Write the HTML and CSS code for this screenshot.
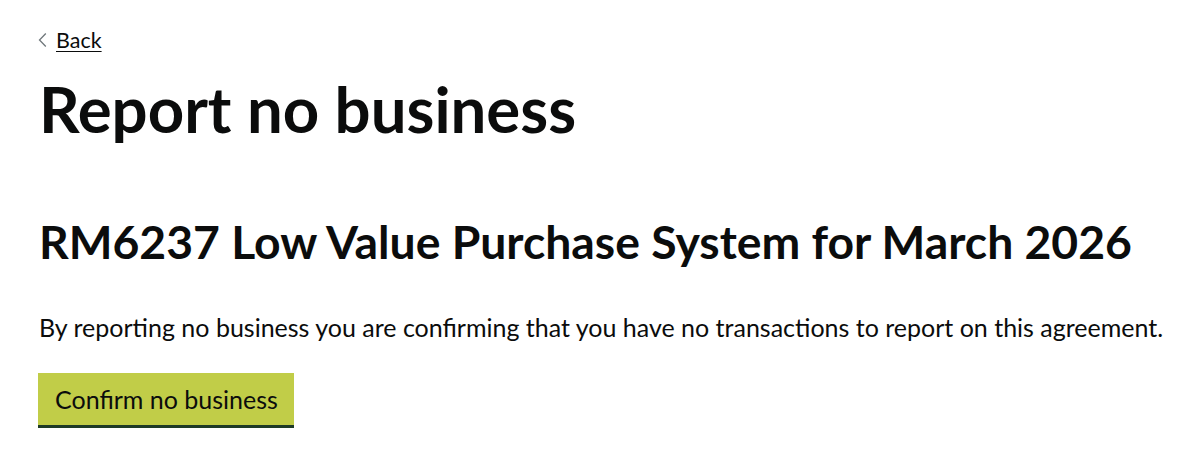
FILE: index.html
```html
<!DOCTYPE html>
<html lang="en">
<head>
<meta charset="utf-8">
<title>Report no business</title>
<link rel="stylesheet" href="styles.css">
</head>
<body>
<main class="page">
  <a class="back" href="#"><svg class="chev" width="9" height="16" viewBox="0 0 9 16"><path d="M7.8 1.5 L1.5 8 L7.8 14.5" fill="none" stroke="#6f777b" stroke-width="1.3"/></svg><span class="back-text">Back</span></a>
  <h1 class="title">Report no business</h1>
  <h2 class="subtitle">RM6237 Low Value Purchase System for March 2026</h2>
  <p class="body">By reporting no business you are confirming that you have no transactions to report on this agreement.</p>
  <button class="btn" type="button">Confirm no business</button>
</main>
</body>
</html>
```
FILE: styles.css
```css
* { box-sizing: border-box; }
html, body { margin: 0; padding: 0; background: #fff; }
body { font-family: Lato, "Noto Sans", sans-serif; color: #0b0c0c; }
.page { padding: 28px 30px 0 38px; display: flex; flex-direction: column; align-items: flex-start; }
.back { display: flex; align-items: center; gap: 9px; color: #0b0c0c; text-decoration: none; font-size: 21.5px; line-height: 24px; }
.back-text { text-decoration: underline; text-underline-offset: 3px; text-decoration-thickness: 1px; }
.chev { display: block; }
.title { font-size: 63.5px; font-weight: 700; line-height: 72px; margin: 21px 0 0 1px; }
.subtitle { font-size: 46.3px; font-weight: 700; line-height: 54px; margin: 69px 0 0 1px; }
.body { font-size: 25px; line-height: 32px; margin: 43px 0 0 1px; white-space: nowrap; }
.btn { margin: 30px 0 0 0; background: #c1cd48; border: 0; border-bottom: 3px solid #1d3a26; border-radius: 0; font-family: inherit; font-size: 25px; line-height: 30px; color: #0b0c0c; padding: 11px 16px 11px 17px; cursor: pointer; }
```
